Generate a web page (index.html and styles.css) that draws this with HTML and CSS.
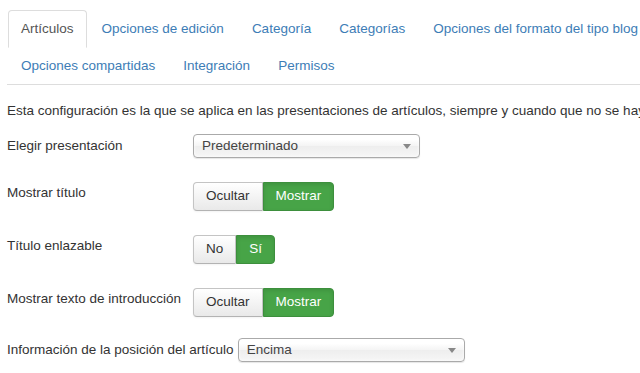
FILE: index.html
```html
<!DOCTYPE html>
<html lang="es">

<head>
  <meta charset="UTF-8">
  <meta name="viewport" content="width=device-width, initial-scale=1.0">
  <title>Opciones de artículos</title>
  <link rel="stylesheet" href="styles.css">
</head>

<body>
  <div class="options">
    <ul class="nav-tabs">
      <li class="active"><a href="#">Artículos</a></li>
      <li><a href="#">Opciones de edición</a></li>
      <li><a href="#">Categoría</a></li>
      <li><a href="#">Categorías</a></li>
      <li><a href="#">Opciones del formato del tipo blog</a></li>
      <li><a href="#">Opciones compartidas</a></li>
      <li><a href="#">Integración</a></li>
      <li><a href="#">Permisos</a></li>
    </ul>

    <p class="tab-description">Esta configuración es la que se aplica en las presentaciones de artículos, siempre y cuando que no se hayan cambiado para un elemento de menú específico.</p>

    <div class="control-group select-row">
      <label class="control-label">Elegir presentación</label>
      <div class="select-box">Predeterminado<span class="caret"></span></div>
    </div>

    <div class="control-group">
      <label class="control-label">Mostrar título</label>
      <div class="btn-group">
        <span class="btn">Ocultar</span>
        <span class="btn btn-success">Mostrar</span>
      </div>
    </div>

    <div class="control-group">
      <label class="control-label">Título enlazable</label>
      <div class="btn-group">
        <span class="btn">No</span>
        <span class="btn btn-success">Sí</span>
      </div>
    </div>

    <div class="control-group">
      <label class="control-label">Mostrar texto de introducción</label>
      <div class="btn-group">
        <span class="btn">Ocultar</span>
        <span class="btn btn-success">Mostrar</span>
      </div>
    </div>

    <div class="control-group select-row tight">
      <label class="control-label">Información de la posición del artículo</label>
      <div class="select-box">Encima<span class="caret"></span></div>
    </div>
  </div>
</body>

</html>
```

FILE: styles.css
```css
body {
  font-family: "Liberation Sans", Arial, Helvetica, sans-serif;
  font-size: 13.5px;
  line-height: 18px;
  color: #333;
  background: #fff;
  margin: 0;
  overflow: hidden;
}

.options {
  width: 720px;
  padding: 10px 0 0 7px;
}

.nav-tabs {
  list-style: none;
  margin: 0;
  padding: 0 0 0 1px;
  display: flex;
  flex-wrap: wrap;
  border-bottom: 1px solid #ddd;
}

.nav-tabs li {
  margin-right: 2px;
  margin-bottom: -1px;
}

.nav-tabs a {
  display: block;
  padding: 9px 12px 9px;
  line-height: 18px;
  border: 1px solid transparent;
  border-radius: 4px 4px 0 0;
  color: #3d7db6;
  text-decoration: none;
}

.nav-tabs .active a {
  color: #555;
  background: #fff;
  border-color: #ddd #ddd transparent;
}

.tab-description {
  margin: 17px 0 14px;
  white-space: nowrap;
}

.control-group {
  display: flex;
  align-items: flex-start;
  margin-bottom: 24px;
}

.control-group .control-label {
  padding-top: 2px;
}

.select-row {
  align-items: center;
}

.select-row .control-label {
  padding-top: 0;
}

.tight {
  margin-top: -3px;
}

.control-label {
  min-width: 182px;
  padding-right: 4px;
  white-space: nowrap;
}

.select-box {
  position: relative;
  box-sizing: border-box;
  width: 227px;
  height: 24px;
  padding: 0 8px;
  line-height: 22px;
  border: 1px solid #aaa;
  border-radius: 4px;
  background: linear-gradient(#fff 20%, #f4f4f4 50%, #eee 52%, #f6f6f6);
  box-shadow: 0 0 3px #fff inset, 0 1px 1px rgba(0, 0, 0, 0.1);
  color: #444;
}

.caret {
  position: absolute;
  right: 8px;
  top: 9px;
  border-left: 4px solid transparent;
  border-right: 4px solid transparent;
  border-top: 5px solid #888;
}

.btn-group {
  display: flex;
}

.btn {
  display: inline-block;
  padding: 4px 12px 5px;
  line-height: 18px;
  color: #333;
  background: linear-gradient(#fff, #e9e9e9);
  border: 1px solid #c4c4c4;
  border-bottom-color: #b3b3b3;
  border-radius: 4px 0 0 4px;
  box-shadow: inset 0 1px 0 rgba(255, 255, 255, 0.2), 0 1px 2px rgba(0, 0, 0, 0.05);
}

.btn-success {
  color: #fff;
  background: #47a447;
  border-color: #3d8f3d;
  border-radius: 0 4px 4px 0;
  box-shadow: inset 0 2px 4px rgba(0, 0, 0, 0.1);
}
```
